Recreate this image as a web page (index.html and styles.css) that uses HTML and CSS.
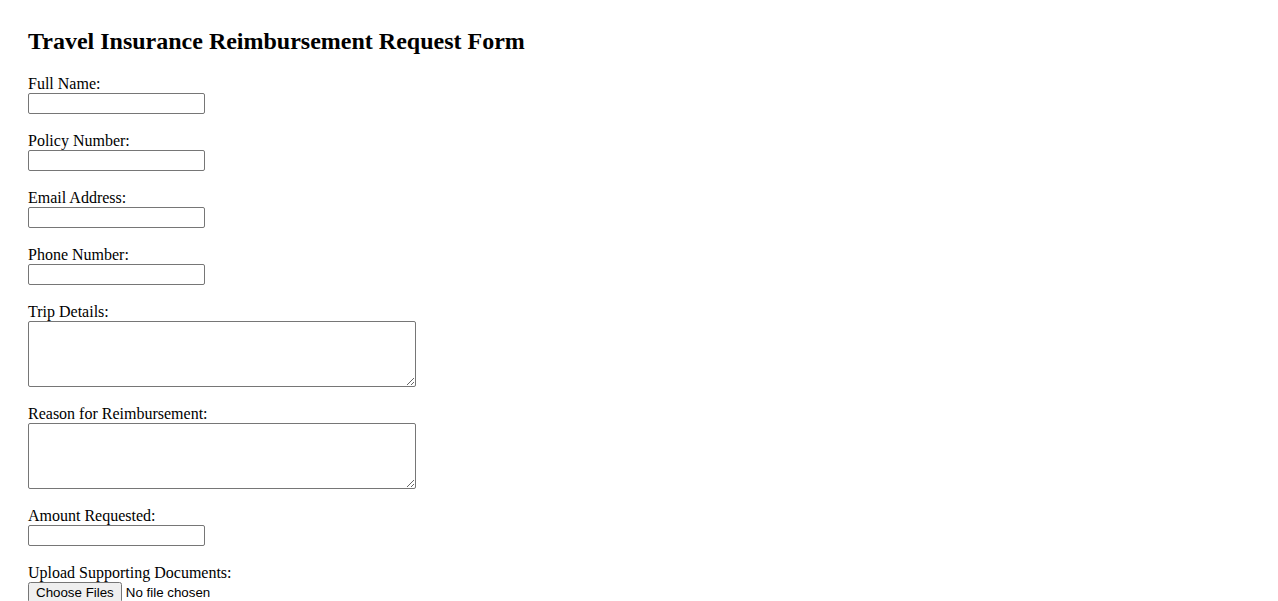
FILE: index.html
```html
<!DOCTYPE html>
<html lang="en">
<head>
<meta charset="UTF-8">
<meta name="viewport" content="width=device-width, initial-scale=1.0">
<title>Travel Insurance Reimbursement Request Form</title>
<link rel="stylesheet" href="styles.css">
</head>
<body>

<div class="container">
  <h2 class="title">Travel Insurance Reimbursement Request Form</h2>

  <form id="reimbursementForm">
    <div class="field">
      <label for="fullName">Full Name:</label>
      <input type="text" id="fullName" name="fullName">
    </div>

    <div class="field">
      <label for="policyNumber">Policy Number:</label>
      <input type="text" id="policyNumber" name="policyNumber">
    </div>

    <div class="field">
      <label for="email">Email Address:</label>
      <input type="email" id="email" name="email">
    </div>

    <div class="field">
      <label for="phone">Phone Number:</label>
      <input type="tel" id="phone" name="phone">
    </div>

    <div class="field">
      <label for="tripDetails">Trip Details:</label>
      <textarea id="tripDetails" name="tripDetails"></textarea>
    </div>

    <div class="field">
      <label for="reason">Reason for Reimbursement:</label>
      <textarea id="reason" name="reason"></textarea>
    </div>

    <div class="field">
      <label for="amount">Amount Requested:</label>
      <input type="number" id="amount" name="amount">
    </div>

    <div class="field">
      <label for="documents">Upload Supporting Documents:</label>
      <input type="file" id="documents" name="documents" multiple>
    </div>
  </form>
</div>

</body>
</html>
```

FILE: styles.css
```css
body {
  margin: 8px;
  font-family: "Liberation Serif", "Times New Roman", serif;
  font-size: 16px;
  color: #000;
  background-color: #fff;
}

.container {
  padding: 20px;
}

.title {
  font-size: 24px;
  font-weight: bold;
  margin: 0 0 20px 0;
}

.field {
  display: flex;
  flex-direction: column;
  align-items: flex-start;
  margin-bottom: 18px;
}

.field label {
  line-height: normal;
}

.field input[type="text"],
.field input[type="email"],
.field input[type="tel"],
.field input[type="number"] {
  box-sizing: border-box;
  width: 177px;
  height: 21px;
  padding: 1px 2px;
  border: 1px solid #767676;
  border-radius: 2px;
  font-family: "Liberation Sans", Arial, sans-serif;
  font-size: 13.33px;
  -moz-appearance: textfield;
}

.field input[type="number"]::-webkit-inner-spin-button,
.field input[type="number"]::-webkit-outer-spin-button {
  -webkit-appearance: none;
  margin: 0;
}

.field textarea {
  box-sizing: border-box;
  width: 388px;
  height: 66px;
  padding: 2px;
  border: 1px solid #767676;
  border-radius: 2px;
  font-family: "Liberation Mono", monospace;
  font-size: 13.33px;
  margin: 0;
}

.field input[type="file"] {
  font-family: "Liberation Sans", Arial, sans-serif;
  font-size: 13.33px;
}
```
